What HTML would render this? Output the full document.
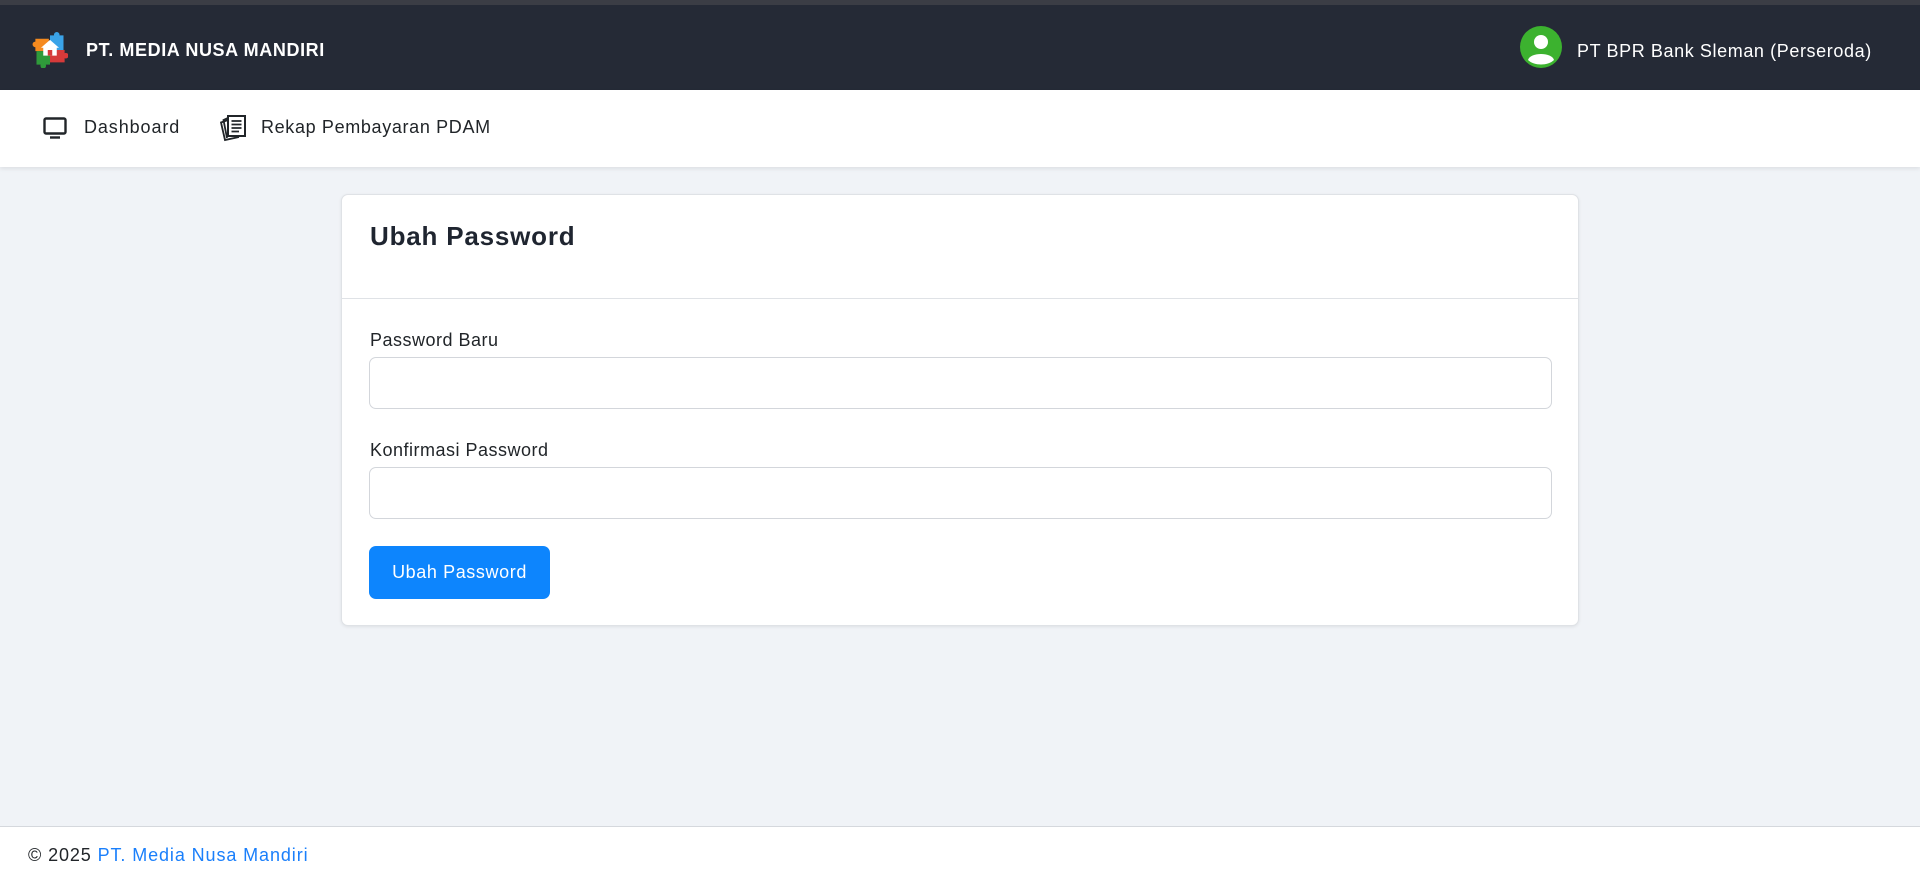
<!DOCTYPE html>
<html><head><meta charset="utf-8"><style>
*{box-sizing:border-box;margin:0;padding:0}
body{width:1920px;height:879px;overflow:hidden;background:#f0f3f7;font-family:"Liberation Sans",sans-serif;color:#212529;position:relative}
.top{position:absolute;left:0;top:0;width:1920px;height:5px;background:#3b3d45}
.nav{position:absolute;left:0;top:5px;width:1920px;height:85px;background:#252a36}
.brand{position:absolute;left:86px;top:35px;color:#fff;font-weight:bold;font-size:18px;letter-spacing:0.6px}
.user{position:absolute;left:1577px;top:36px;color:#fff;font-size:18px;letter-spacing:0.6px}
.sub{position:absolute;left:0;top:90px;width:1920px;height:77px;background:#fff;box-shadow:0 2px 4px rgba(0,0,0,.08)}
.sub span{position:absolute;top:27px;font-size:18px;color:#212529}
.card{position:absolute;left:341px;top:194px;width:1238px;height:432px;background:#fff;border:1px solid #dfe2e6;border-radius:7px;box-shadow:0 1px 3px rgba(0,0,0,.08)}
.card h3{position:absolute;left:28px;top:26px;font-size:26px;font-weight:bold;color:#1f2530;letter-spacing:0.8px}
.hr{position:absolute;left:0;top:103px;width:100%;height:1px;background:#dfe2e6}
.lbl{position:absolute;left:28px;font-size:18px;letter-spacing:0.5px}
.inp{position:absolute;left:27px;width:1183px;height:52px;border:1px solid #d3d6db;border-radius:7px}
.btn{position:absolute;left:27px;top:351px;width:181px;height:53px;background:#0d85fd;border-radius:7px;color:#fff;font-size:18px;text-align:center;line-height:53px;letter-spacing:0.6px}
.foot{position:absolute;left:0;top:826px;width:1920px;height:53px;background:#fff;border-top:1px solid #d5d8dd}
.foot div{position:absolute;left:28px;top:18px;font-size:18px;letter-spacing:0.9px}
.foot a{color:#1a7ffb;text-decoration:none}
</style></head><body>
<div class="top"></div>
<div class="nav">
<svg style="position:absolute;left:32px;top:27px" width="36" height="36" viewBox="0 0 32 32">
<path d="M3 6 H15 V17 H3 Z" fill="#f58a1f"/>
<circle cx="3" cy="11" r="2.5" fill="#f58a1f"/>
<path d="M16 3 H28 V16 H16 Z" fill="#3aa3e8"/>
<circle cx="22" cy="2.5" r="2.5" fill="#3aa3e8"/>
<path d="M16 16 H29 V27 H16 Z" fill="#d63a3a"/>
<circle cx="30" cy="21" r="2.5" fill="#d63a3a"/>
<path d="M4 17 H16 V29 H4 Z" fill="#2f9a3a"/>
<circle cx="10" cy="30" r="2.5" fill="#2f9a3a"/>
<path d="M16 7 L24 14 H22 V21 H10 V14 H8 Z" fill="#fff"/>
<rect x="14" y="16" width="4" height="5" fill="#d63a3a"/>
</svg>
<div class="brand">PT. MEDIA NUSA MANDIRI</div>
<svg style="position:absolute;left:1520px;top:21px" width="42" height="42" viewBox="0 0 42 42">
<circle cx="21" cy="21" r="21" fill="#3cb22f"/>
<circle cx="21" cy="16" r="7" fill="#fff"/>
<path d="M8 34 C10 26 32 26 34 34 C28 40 14 40 8 34Z" fill="#fff"/>
</svg>
<div class="user">PT BPR Bank Sleman (Perseroda)</div>
</div>
<div class="sub">
<svg style="position:absolute;left:43px;top:27px" width="24" height="22" viewBox="0 0 24 22" fill="none" stroke="#212529" stroke-width="2.4">
<rect x="1.5" y="1.5" width="21" height="15" rx="1.5"/><path d="M7 20.5H17"/>
</svg>
<span style="left:84px;letter-spacing:0.9px">Dashboard</span>
<svg style="position:absolute;left:219px;top:24px" width="28" height="28" viewBox="0 0 28 28" fill="none" stroke="#212529" stroke-width="1.8">
<path d="M9 6 L2 8.5 L6 26 L20 23"/><path d="M9 4 L4.5 6 L8 24"/>
<rect x="9" y="2" width="17" height="20" fill="#fff" stroke-width="2"/>
<path d="M12.5 7H22.5M12.5 10.5H22.5M12.5 14H22.5M12.5 17.5H20"/>
</svg>
<span style="left:261px;letter-spacing:0.65px">Rekap Pembayaran PDAM</span>
</div>
<div class="card">
<h3>Ubah Password</h3>
<div class="hr"></div>
<div class="lbl" style="top:135px">Password Baru</div>
<div class="inp" style="top:162px"></div>
<div class="lbl" style="top:245px">Konfirmasi Password</div>
<div class="inp" style="top:272px"></div>
<div class="btn">Ubah Password</div>
</div>
<div class="foot"><div>© 2025 <a>PT. Media Nusa Mandiri</a></div></div>
</body></html>
